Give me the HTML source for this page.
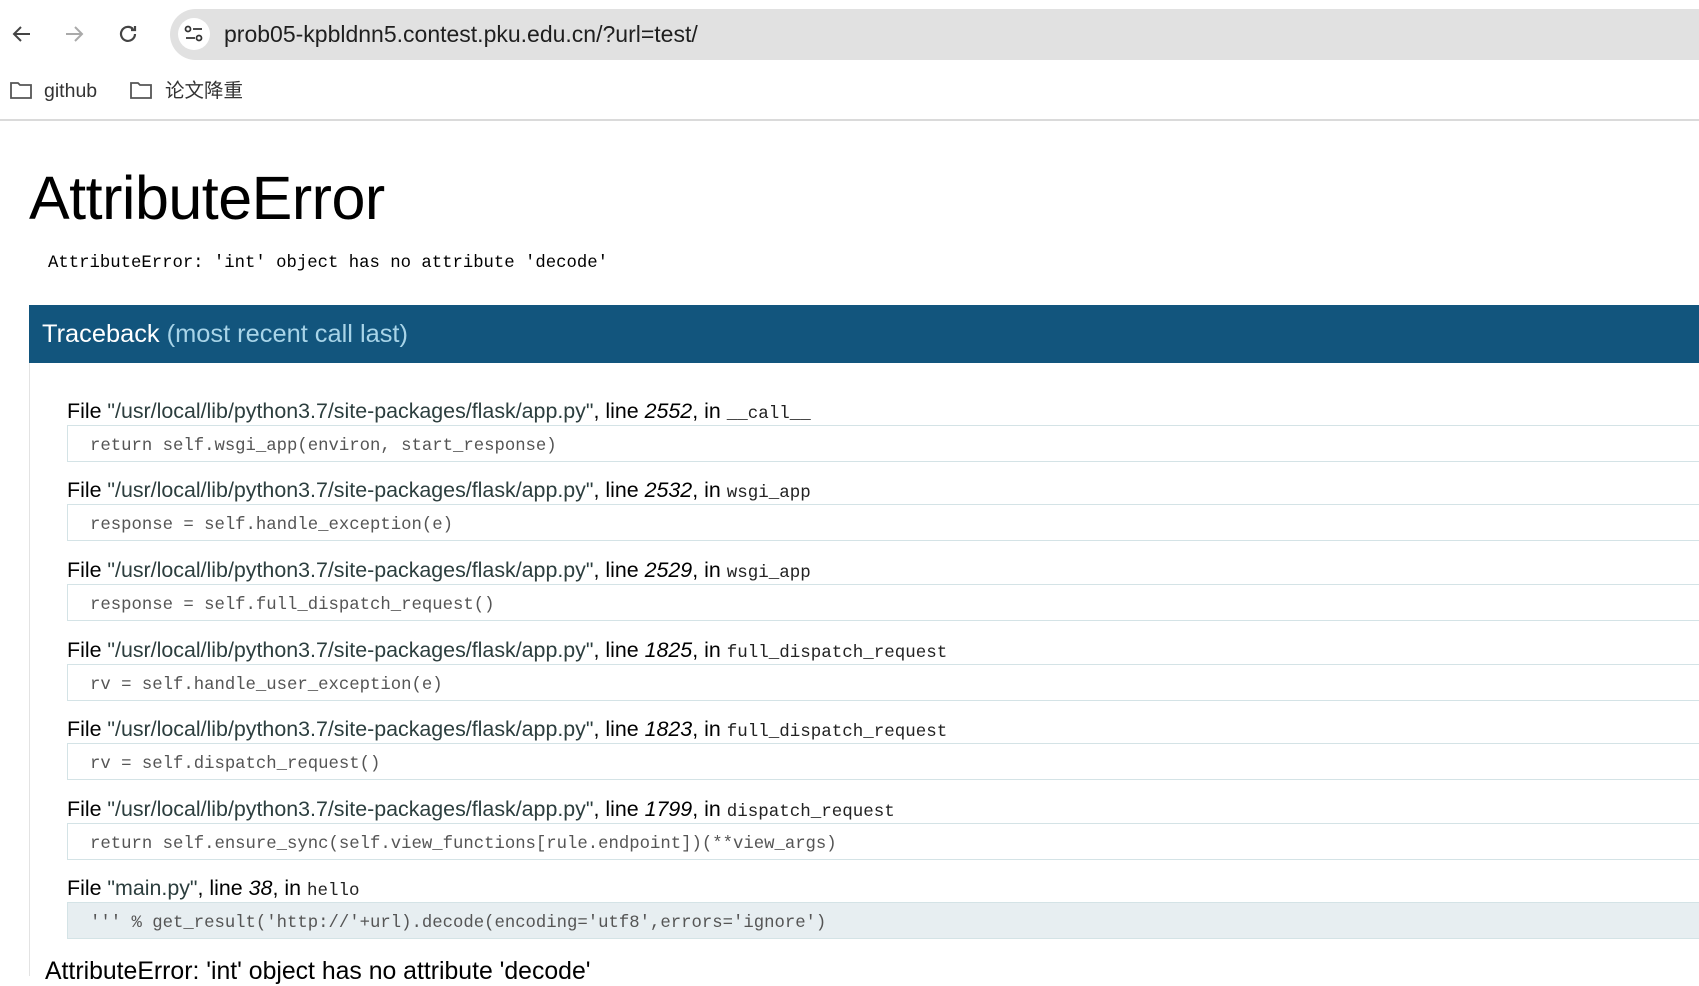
<!DOCTYPE html>
<html><head><meta charset="utf-8"><style>
*{margin:0;padding:0;box-sizing:border-box}
body{width:1699px;height:976px;overflow:hidden;background:#fff;font-family:"Liberation Sans","Noto Sans CJK SC",sans-serif;position:relative}
.abs{position:absolute}
.addr{left:170px;top:9px;width:1560px;height:51px;background:#e1e1e1;border-radius:26px}
.url{left:224px;top:18px;font-size:23px;color:#1f1f1f;line-height:32px}
.bm{top:78px;font-size:19.5px;color:#333;line-height:26px}
.sep{left:0;top:119px;width:1699px;height:2px;background:#dadada}
h1{position:absolute;left:29px;top:163px;font-size:61px;font-weight:normal;color:#000;line-height:70px;letter-spacing:-0.5px}
.mono{font-family:"Liberation Mono","Noto Sans CJK SC",monospace}
.msg{left:48px;top:252px;font-size:17.3px;color:#000;line-height:24px}
.tb{left:29px;top:305px;width:1670px;height:58px;background:#12557d;color:#fff;font-size:25.4px;line-height:58px;padding-left:13px}
.tb span{color:#a8d4e8}
.lb{left:29px;top:363px;width:1px;height:613px;background:#e3e3e3}
.file{left:67px;font-size:21.4px;color:#000;line-height:26px;white-space:nowrap}
.file .p{color:#2c3e3e}
.file .f{font-family:"Liberation Mono",monospace;font-size:17.5px;color:#222}
.code{left:67px;width:1640px;height:37px;border:1px solid #d4e3e6;border-right:none;font-family:"Liberation Mono",monospace;font-size:17.3px;color:#555;line-height:41px;padding-left:22px;white-space:pre}
.last{background:#e7eef1}
</style></head><body>
<svg class="abs" style="left:10px;top:22px" width="24" height="24" viewBox="0 0 24 24"><path d="M20 12H5M11 5l-7 7 7 7" fill="none" stroke="#444" stroke-width="2"/></svg>
<svg class="abs" style="left:62px;top:22px" width="24" height="24" viewBox="0 0 24 24"><path d="M4 12h15M13 5l7 7-7 7" fill="none" stroke="#aaa" stroke-width="2"/></svg>
<svg class="abs" style="left:116px;top:22px" width="24" height="24" viewBox="0 0 24 24"><path d="M19 12a7 7 0 1 1-2-5M19 4v4h-4" fill="none" stroke="#444" stroke-width="2.2"/></svg>
<div class="abs addr"></div>
<div class="abs" style="left:178px;top:18px;width:32px;height:32px;border-radius:16px;background:#fff"></div>
<svg class="abs" style="left:183px;top:24px" width="22" height="20" viewBox="0 0 22 20"><circle cx="5" cy="5" r="2.5" fill="none" stroke="#333" stroke-width="1.8"/><path d="M10 5h9M3 14h9" stroke="#333" stroke-width="1.8"/><circle cx="16" cy="14" r="2.5" fill="none" stroke="#333" stroke-width="1.8"/></svg>
<div class="abs url">prob05-kpbldnn5.contest.pku.edu.cn/?url=test/</div>
<svg class="abs" style="left:9px;top:80px" width="24" height="20" viewBox="0 0 24 20"><path d="M2 3h7l2 2h11v13H2z" fill="none" stroke="#555" stroke-width="1.8"/></svg>
<div class="abs bm" style="left:44px">github</div>
<svg class="abs" style="left:129px;top:80px" width="24" height="20" viewBox="0 0 24 20"><path d="M2 3h7l2 2h11v13H2z" fill="none" stroke="#555" stroke-width="1.8"/></svg>
<div class="abs bm" style="left:165px">论文降重</div>
<div class="abs sep"></div>
<h1>AttributeError</h1>
<div class="abs msg mono">AttributeError: 'int' object has no attribute 'decode'</div>
<div class="abs tb">Traceback <span>(most recent call last)</span></div>
<div class="abs lb"></div>

<div class="abs file" style="top:398px">File <span class="p">"/usr/local/lib/python3.7/site-packages/flask/app.py"</span>, line <i>2552</i>, in <span class="f">__call__</span></div>
<div class="abs code" style="top:425px">return self.wsgi_app(environ, start_response)</div>
<div class="abs file" style="top:477px">File <span class="p">"/usr/local/lib/python3.7/site-packages/flask/app.py"</span>, line <i>2532</i>, in <span class="f">wsgi_app</span></div>
<div class="abs code" style="top:504px">response = self.handle_exception(e)</div>
<div class="abs file" style="top:557px">File <span class="p">"/usr/local/lib/python3.7/site-packages/flask/app.py"</span>, line <i>2529</i>, in <span class="f">wsgi_app</span></div>
<div class="abs code" style="top:584px">response = self.full_dispatch_request()</div>
<div class="abs file" style="top:637px">File <span class="p">"/usr/local/lib/python3.7/site-packages/flask/app.py"</span>, line <i>1825</i>, in <span class="f">full_dispatch_request</span></div>
<div class="abs code" style="top:664px">rv = self.handle_user_exception(e)</div>
<div class="abs file" style="top:716px">File <span class="p">"/usr/local/lib/python3.7/site-packages/flask/app.py"</span>, line <i>1823</i>, in <span class="f">full_dispatch_request</span></div>
<div class="abs code" style="top:743px">rv = self.dispatch_request()</div>
<div class="abs file" style="top:796px">File <span class="p">"/usr/local/lib/python3.7/site-packages/flask/app.py"</span>, line <i>1799</i>, in <span class="f">dispatch_request</span></div>
<div class="abs code" style="top:823px">return self.ensure_sync(self.view_functions[rule.endpoint])(**view_args)</div>
<div class="abs file" style="top:875px">File <span class="p">"main.py"</span>, line <i>38</i>, in <span class="f">hello</span></div>
<div class="abs code last" style="top:902px">''' % get_result('http://'+url).decode(encoding='utf8',errors='ignore')</div>
<div class="abs" style="left:45px;top:958px;font-size:24.8px;color:#000;line-height:28px">AttributeError: 'int' object has no attribute 'decode'</div>
</body></html>
